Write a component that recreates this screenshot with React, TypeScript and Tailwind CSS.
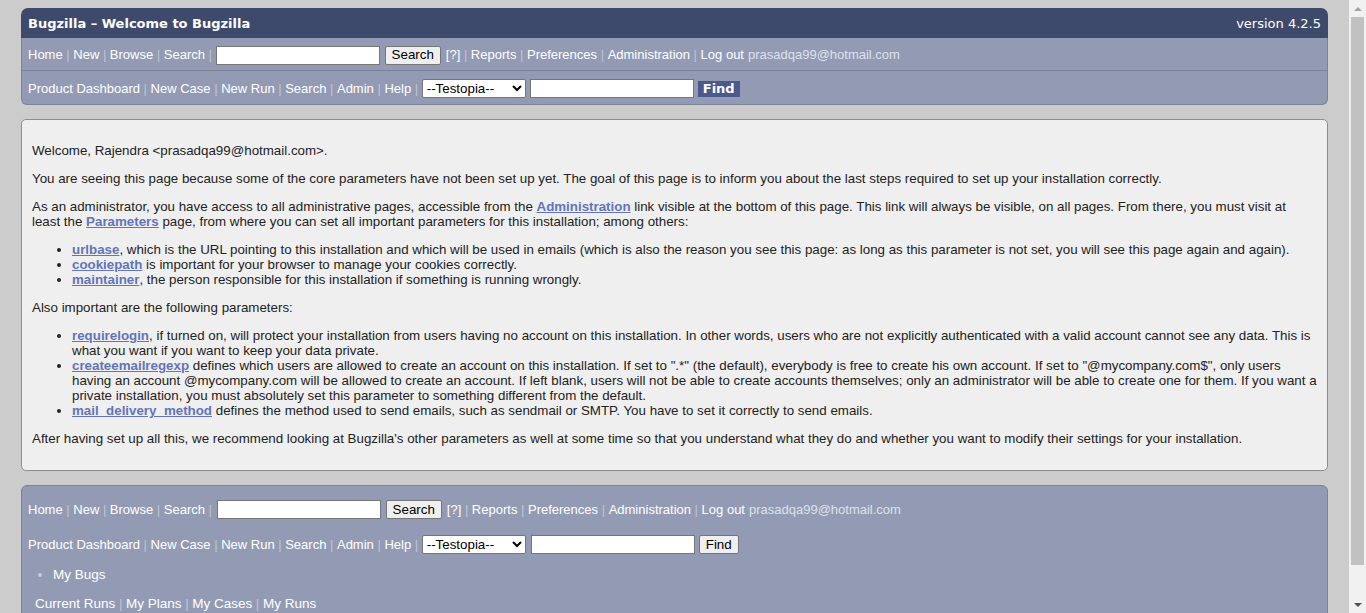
import React from "react";

const Sep = () => <span className="text-[#bfc4d3] mx-[3.6px]">|</span>;

function NavRow1({ footer }: { footer?: boolean }) {
  return (
    <div className="flex items-center whitespace-nowrap text-[13px] text-white font-['Liberation_Sans',Arial,sans-serif]">
      <span>Home</span><Sep /><span>New</span><Sep /><span>Browse</span><Sep /><span>Search</span><Sep />
      <input className={`w-[164px] h-[19px] bg-white border border-[#767676] ${footer ? "ml-[1px]" : ""}`} />
      <button className="ml-[5px] h-[19px] px-[6px] bg-[#efefef] border border-[#767676] rounded-[2px] text-[13.33px] text-black leading-none">Search</button>
      <span className="ml-[5px]">[?]</span><Sep /><span>Reports</span><Sep /><span>Preferences</span><Sep /><span>Administration</span><Sep />
      <span>Log out</span><span className="ml-[4px] text-[#dde1ea]">prasadqa99@hotmail.com</span>
    </div>
  );
}

function NavRow2({ footer }: { footer?: boolean }) {
  return (
    <div className="flex items-center whitespace-nowrap text-[13px] text-white font-['Liberation_Sans',Arial,sans-serif]">
      <span>Product Dashboard</span><Sep /><span>New Case</span><Sep /><span>New Run</span><Sep /><span>Search</span><Sep /><span>Admin</span><Sep /><span>Help</span><Sep />
      <select className="w-[104px] h-[19px] bg-white border border-[#767676] rounded-[2px] text-[13.33px] text-black">
        <option>--Testopia--</option>
      </select>
      <input className={`w-[164px] h-[19px] bg-white border border-[#767676] ${footer ? "ml-[5px]" : "ml-[4px]"}`} />
      {footer ? (
        <button className="ml-[4px] h-[19px] px-[6px] bg-[#efefef] border border-[#767676] rounded-[2px] text-[13.33px] text-black leading-none">Find</button>
      ) : (
        <button className="ml-[4px] h-[16px] w-[42px] bg-[#4b5a8b] text-[13px] font-bold text-white leading-none font-['DejaVu_Sans',Verdana,sans-serif]">Find</button>
      )}
    </div>
  );
}

const L = ({ children }: { children: React.ReactNode }) => (
  <a className="font-bold underline text-[#6374b9]">{children}</a>
);

export default function App() {
  return (
    <div className="flex h-[613px] overflow-hidden bg-[#cccccc]">
      <div className="flex-1 px-[21px] pt-[8px] flex flex-col gap-[14px]">
        {/* Header */}
        <div>
          <div className="h-[30px] bg-[#3e4a6b] rounded-t-[7px] flex items-center justify-between px-[7px] pt-[2px] text-white text-[13px] font-['DejaVu_Sans',Verdana,sans-serif]">
            <span className="font-bold">Bugzilla – Welcome to Bugzilla</span>
            <span>version 4.2.5</span>
          </div>
          <div className="h-[33px] bg-[#939bb4] border-x border-b border-[#7c8398] px-[6px] pt-[2px] flex items-center">
            <NavRow1 />
          </div>
          <div className="h-[34px] bg-[#939bb4] border-x border-b border-[#7c8398] rounded-b-[6px] px-[6px] pt-[2px] flex items-center">
            <NavRow2 />
          </div>
        </div>

        {/* Main content */}
        <div className="bg-[#efefef] border border-[#8e8e8e] rounded-[5px] px-[10px] pt-[10px] pb-[11px] text-[13.33px] leading-[15px] text-[#222] font-['Liberation_Sans',Arial,sans-serif]">
          <p className="my-[13px]">Welcome, Rajendra &lt;prasadqa99@hotmail.com&gt;.</p>
          <p className="my-[13px]">You are seeing this page because some of the core parameters have not been set up yet. The goal of this page is to inform you about the last steps required to set up your installation correctly.</p>
          <p className="my-[13px]">As an administrator, you have access to all administrative pages, accessible from the <L>Administration</L> link visible at the bottom of this page. This link will always be visible, on all pages. From there, you must visit at least the <L>Parameters</L> page, from where you can set all important parameters for this installation; among others:</p>
          <ul className="my-[13px] pl-[40px] list-disc">
            <li><L>urlbase</L>, which is the URL pointing to this installation and which will be used in emails (which is also the reason you see this page: as long as this parameter is not set, you will see this page again and again).</li>
            <li><L>cookiepath</L> is important for your browser to manage your cookies correctly.</li>
            <li><L>maintainer</L>, the person responsible for this installation if something is running wrongly.</li>
          </ul>
          <p className="my-[13px]">Also important are the following parameters:</p>
          <ul className="my-[13px] pl-[40px] list-disc">
            <li><L>requirelogin</L>, if turned on, will protect your installation from users having no account on this installation. In other words, users who are not explicitly authenticated with a valid account cannot see any data. This is what you want if you want to keep your data private.</li>
            <li><L>createemailregexp</L> defines which users are allowed to create an account on this installation. If set to ".*" (the default), everybody is free to create his own account. If set to "@mycompany.com$", only users having an account @mycompany.com will be allowed to create an account. If left blank, users will not be able to create accounts themselves; only an administrator will be able to create one for them. If you want a private installation, you must absolutely set this parameter to something different from the default.</li>
            <li><L>mail_delivery_method</L> defines the method used to send emails, such as sendmail or SMTP. You have to set it correctly to send emails.</li>
          </ul>
          <p className="my-[13px]">After having set up all this, we recommend looking at Bugzilla's other parameters as well at some time so that you understand what they do and whether you want to modify their settings for your installation.</p>
        </div>

        {/* Footer */}
        <div className="flex-1 bg-[#939bb4] border border-[#7c8398] rounded-t-[6px] px-[6px] pt-[14px]">
          <NavRow1 footer />
          <div className="mt-[15px]">
            <NavRow2 footer />
          </div>
          <ul className="mt-[11px] pl-[25px] list-disc marker:text-[#c8ccd9] text-white text-[13.5px] font-['Liberation_Sans',Arial,sans-serif]">
            <li>My Bugs</li>
          </ul>
          <div className="mt-[9px] pl-[7px] text-white text-[13.5px] font-['Liberation_Sans',Arial,sans-serif]">
            <span>Current Runs</span><Sep /><span>My Plans</span><Sep /><span>My Cases</span><Sep /><span>My Runs</span>
          </div>
        </div>
      </div>

      {/* Scrollbar */}
      <div className="w-[17px] bg-[#f1f1f1] flex flex-col items-center">
        <div className="h-[17px] flex items-center justify-center">
          <div className="w-0 h-0 border-x-[4px] border-x-transparent border-b-[4px] border-b-[#a3a3a3]" />
        </div>
        <div className="w-[13px] h-[548px] bg-[#c1c1c1]" />
        <div className="flex-1 flex items-end justify-center pb-[6px]">
          <div className="w-0 h-0 border-x-[4px] border-x-transparent border-t-[4px] border-t-[#505050]" />
        </div>
      </div>
    </div>
  );
}
